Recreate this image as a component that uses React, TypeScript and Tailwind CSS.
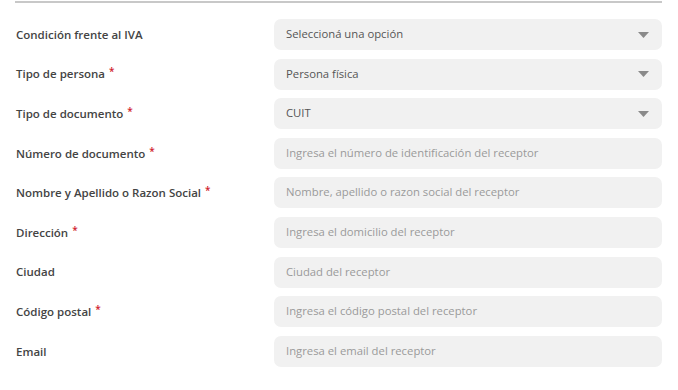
import React from "react";

type Row = { label: string; required?: boolean; kind: "select" | "input"; text: string };

const rows: Row[] = [
  { label: "Condición frente al IVA", kind: "select", text: "Seleccioná una opción" },
  { label: "Tipo de persona", required: true, kind: "select", text: "Persona física" },
  { label: "Tipo de documento", required: true, kind: "select", text: "CUIT" },
  { label: "Número de documento", required: true, kind: "input", text: "Ingresa el número de identificación del receptor" },
  { label: "Nombre y Apellido o Razon Social", required: true, kind: "input", text: "Nombre, apellido o razon social del receptor" },
  { label: "Dirección", required: true, kind: "input", text: "Ingresa el domicilio del receptor" },
  { label: "Ciudad", kind: "input", text: "Ciudad del receptor" },
  { label: "Código postal", required: true, kind: "input", text: "Ingresa el código postal del receptor" },
  { label: "Email", kind: "input", text: "Ingresa el email del receptor" },
];

export default function App() {
  return (
    <div className="w-[678px] h-[390px] bg-white overflow-hidden" style={{ fontFamily: '"Open Sans", sans-serif' }}>
      <div className="ml-[15px] w-[647px] mt-px h-[2px] bg-[#c8c8c8]" />
      <div className="mt-[16px] flex flex-col gap-[8.6px]">
        {rows.map((r) => (
          <div key={r.label} className="flex items-center h-[31px]">
            <div className="w-[274px] pl-[16px] text-[11.5px] font-semibold text-[#444] flex items-start">
              <span>{r.label}</span>
              {r.required && <span className="text-[#d0212b] text-[10px] ml-[4px] leading-none mt-[1px]">*</span>}
            </div>
            <div className="w-[388px] h-[31px] rounded-[7px] bg-[#f1f1f1] flex items-center pl-[12px] pr-[12px] justify-between">
              <span className={"text-[11.3px] " + (r.kind === "select" ? "text-[#555]" : "text-[#9a9a9a]")}>{r.text}</span>
              {r.kind === "select" && (
                <svg width="11" height="6" viewBox="0 0 11 6" className="mr-[1px]">
                  <path d="M0 0 L11 0 L5.5 6 Z" fill="#8a8a8a" />
                </svg>
              )}
            </div>
          </div>
        ))}
      </div>
    </div>
  );
}
